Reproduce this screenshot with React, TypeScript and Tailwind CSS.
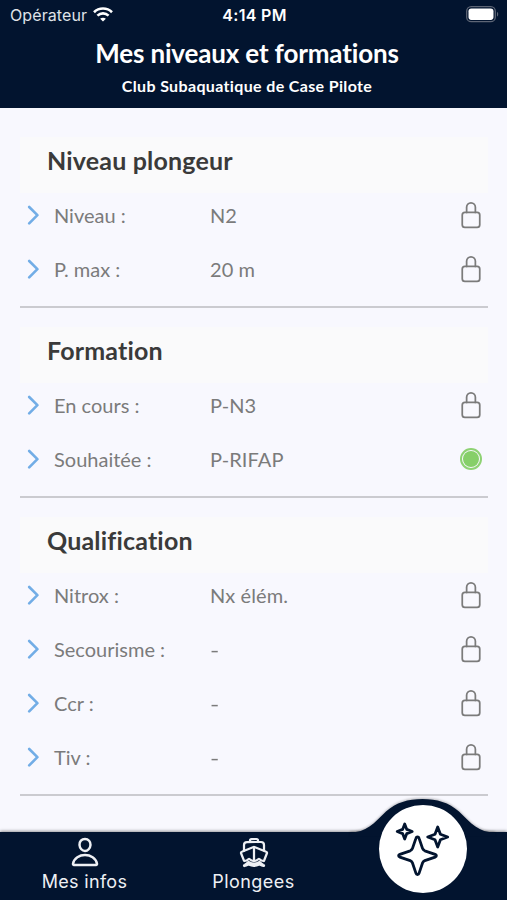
import {
  IoBoatOutline,
  IoLockClosedOutline,
  IoPersonOutline,
} from 'react-icons/io5';

type Row = { label: string; value: string; open?: boolean };

const sections: { title: string; rows: Row[] }[] = [
  {
    title: 'Niveau plongeur',
    rows: [
      { label: 'Niveau :', value: 'N2' },
      { label: 'P. max :', value: '20 m' },
    ],
  },
  {
    title: 'Formation',
    rows: [
      { label: 'En cours :', value: 'P-N3' },
      { label: 'Souhaitée :', value: 'P-RIFAP', open: true },
    ],
  },
  {
    title: 'Qualification',
    rows: [
      { label: 'Nitrox :', value: 'Nx élém.' },
      { label: 'Secourisme :', value: '-' },
      { label: 'Ccr :', value: '-' },
      { label: 'Tiv :', value: '-' },
    ],
  },
];

const Wifi = () => (
  <svg width="20" height="15" viewBox="0 0 20 15" fill="none" stroke="white" strokeWidth="2.6">
    <path d="M1 5.2C6 .3 14 .3 19 5.2" />
    <path d="M4.4 8.6c3.2-3 8-3 11.2 0" />
    <path d="M10 14.6 7.100 11.700c1.700-1.400 4.100-1.400 5.800 0z" fill="white" stroke="none" />
  </svg>
);

const Battery = () => (
  <svg width="33" height="17" viewBox="0 0 33 17" fill="none">
    <rect x="0.7" y="0.7" width="28.6" height="15" rx="4.5" stroke="#5d6575" strokeWidth="1.3" />
    <rect x="2.5" y="2.5" width="25" height="11.4" rx="2.8" fill="white" />
    <path d="M31 6v4.500c1.600-.6 1.600-3.900 0-4.500z" fill="#5d6575" />
  </svg>
);

const Chevron = () => (
  <svg width="12" height="20" viewBox="0 0 12 20" fill="none" stroke="#72ade6" strokeWidth="2.6">
    <path d="m2.2 2 8.200 8.200-8.200 8.200" strokeLinecap="round" strokeLinejoin="round" />
  </svg>
);

const Sparkles = () => (
  <svg width="88" height="88" viewBox="0 0 88 88" fill="none" stroke="#02142f" strokeWidth="2.8" strokeLinejoin="round">
    <path d="M38.500 32q1.200 0 1.600 1.400l3.500 10.200q.6 1.600 2.200 2.200l10.300 3.500q1.300.5 1.300 1.400t-1.300 1.400l-10.300 3.500q-1.600.6-2.200 2.200l-3.500 10.300q-.4 1.400-1.600 1.400t-1.600-1.400l-3.500-10.300q-.6-1.600-2.200-2.200l-10.300-3.500q-1.300-.5-1.300-1.400t1.300-1.400l10.300-3.500q1.600-.6 2.200-2.200l3.500-10.200q.4-1.400 1.600-1.400z" />
    <path d="m25.700 19 2.100 5.400 5.400 2.100-5.400 2.100-2.100 5.400-2.100-5.400-5.400-2.100 5.400-2.100z" />
    <path d="m58.700 22 2.700 7.300 7.300 2.700-7.300 2.700-2.700 7.300-2.700-7.300-7.300-2.700 7.300-2.700z" />
  </svg>
);

const App = () => {
  return (
    <div className="flex h-[900px] w-[507px] flex-col overflow-hidden bg-[#f8f8fe] font-['Lato',sans-serif]">
      <header className="h-[108px] bg-[#02142f] text-white">
        <div className="flex h-[29px] items-center justify-between pr-[8px] pl-[10px] font-['Inter',sans-serif] whitespace-nowrap">
          <div className="flex w-[150px] items-center gap-[6px] text-[16px] text-[#dfe2e8]">
            <span className="tracking-[0.1px]">Opérateur</span>
            <Wifi />
          </div>
          <div className="text-center text-[16px] font-semibold tracking-[0.3px]">4:14 PM</div>
          <div className="flex w-[150px] justify-end">
            <Battery />
          </div>
        </div>
        <h1 className="mt-[6px] pr-[13px] text-center text-[26px] leading-9 font-bold tracking-[-0.16px] whitespace-nowrap">
          Mes niveaux et formations
        </h1>
        <p className="mt-[5px] pr-[13px] text-center text-[16px] leading-5 font-bold tracking-[0.35px] whitespace-nowrap">
          Club Subaquatique de Case Pilote
        </p>
      </header>

      <main className="flex h-[724px] flex-col gap-[19px] pt-[29px] pr-[19px] pl-5">
        {sections.map((section) => (
          <section key={section.title} className="border-b-2 border-[#cbcbd0] pb-[13px]">
            <h2 className="h-14 bg-[#fafafb] pt-[5px] pl-[27px] text-[25px] leading-9 font-bold tracking-[0.18px] text-[#3a3a3a]">
              {section.title}
            </h2>
            <div className="flex flex-col gap-2">
              {section.rows.map((row) => (
                <div key={row.label} className="flex h-[46px] items-center pb-[3px] pl-[7px] text-[20px] text-[#7b7b7b]">
                  <Chevron />
                  <span className="w-[157px] pl-[15px]">{row.label}</span>
                  <span className="grow pl-[14px] tracking-[0.1px]">
                    {row.value === '-' ? <span className="inline-block origin-left scale-x-125">-</span> : row.value}
                  </span>
                  <span className="flex w-[34px] justify-center">
                    {row.open ? (
                      <span className="flex size-[22px] items-center justify-center rounded-full border-2 border-[#8ed273]">
                        <span className="size-4 rounded-full bg-[#86cf69]" />
                      </span>
                    ) : (
                      <IoLockClosedOutline className="size-7" />
                    )}
                  </span>
                </div>
              ))}
            </div>
          </section>
        ))}
      </main>

      <nav className="relative flex h-[68px] bg-[#02142f] font-['Inter',sans-serif] text-[18px] text-[#eef0f4] shadow-[0_-1px_3px_rgba(0,0,0,0.4)]">
        <svg className="absolute -top-[36px] left-[340px] drop-shadow-[0_-1px_1px_rgba(0,0,0,0.25)]" width="167" height="40" viewBox="0 0 167 40" fill="#02142f">
          <path d="M10 40V36.500C26 36.500 34 27.500 46 15.500C56 6.500 68 3 82.500 3S109 6.500 119 15.500C131 27.500 139 36.500 155 36.500V40z" />
        </svg>
        <div className="flex w-[169px] flex-col items-center">
          <IoPersonOutline className="mt-1 size-8 [&_path]:[stroke-width:40px]" />
          <span className="leading-7 tracking-[0.3px]">Mes infos</span>
        </div>
        <div className="flex w-[169px] flex-col items-center">
          <IoBoatOutline className="mt-1 size-8 [&_path]:[stroke-width:36px]" />
          <span className="leading-7 tracking-[0.45px]">Plongees</span>
        </div>
        <button className="absolute -top-[27px] left-[379px] size-[88px] rounded-full bg-white">
          <Sparkles />
        </button>
      </nav>
    </div>
  );
};

export default App;
